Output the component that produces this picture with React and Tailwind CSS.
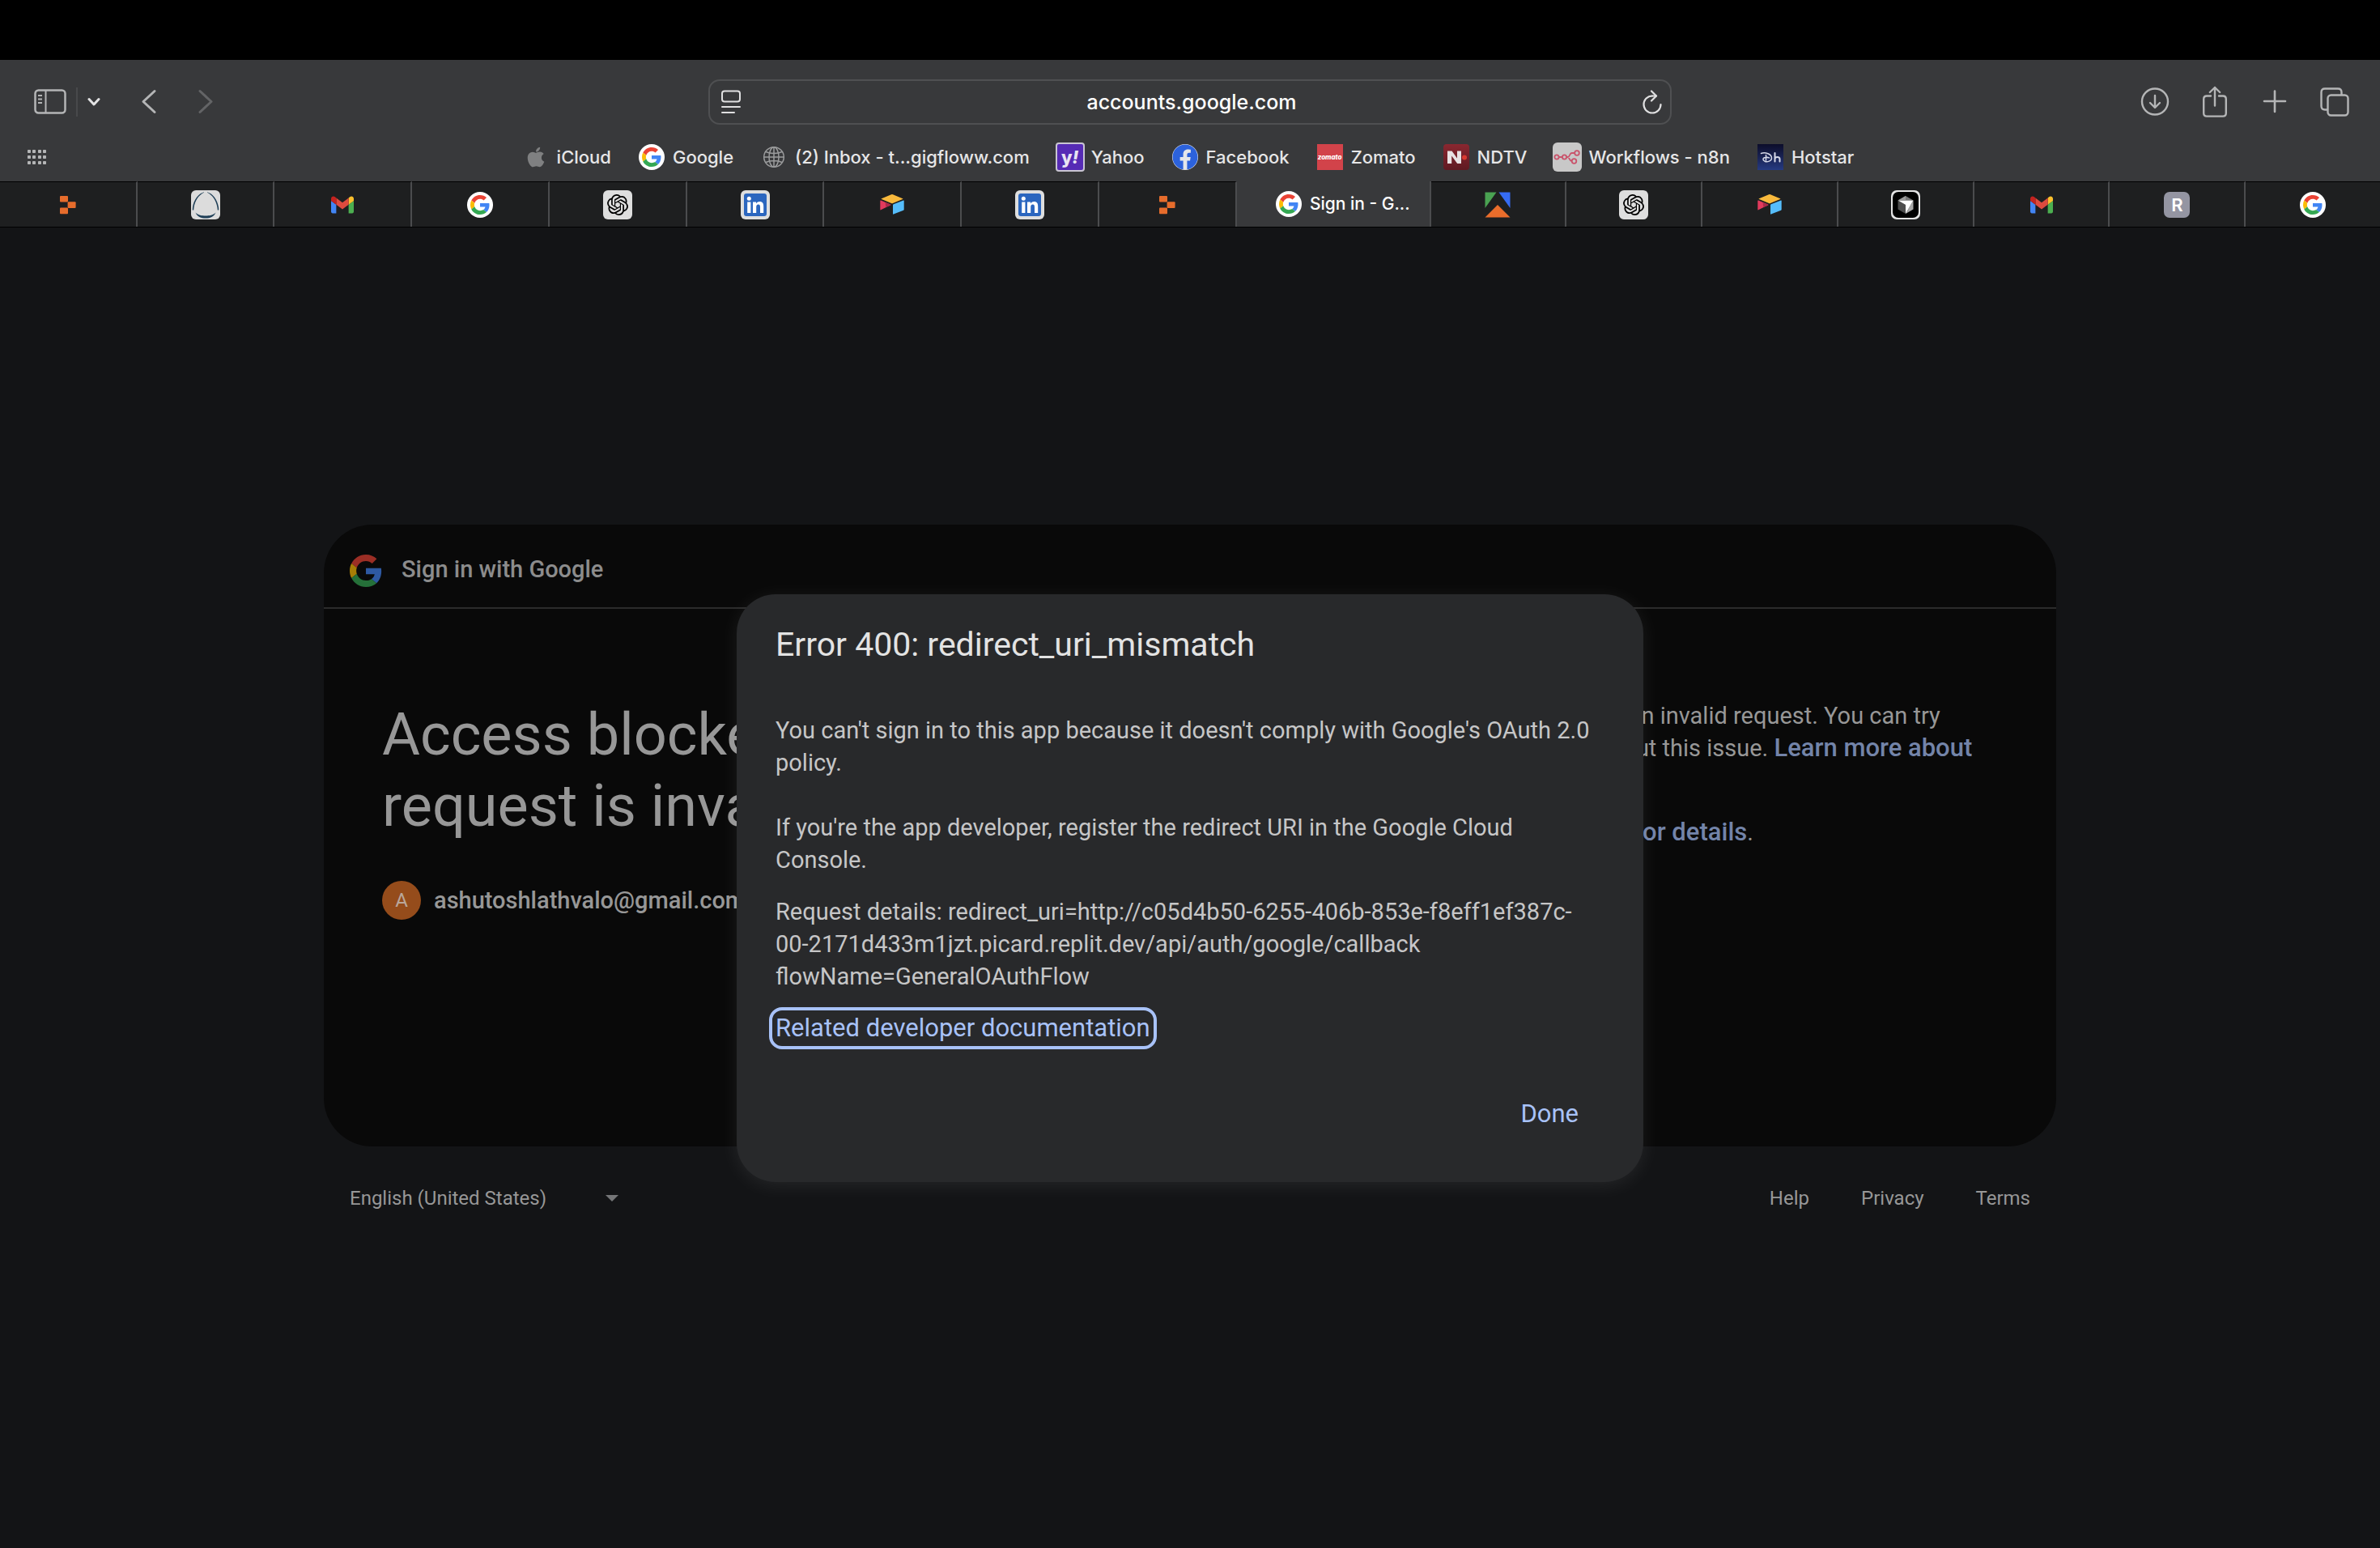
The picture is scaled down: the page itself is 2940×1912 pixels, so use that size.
import { FaApple, FaFacebook } from "react-icons/fa";
import { SiOpenai } from "react-icons/si";

/* ---------- logos ---------- */

function GoogleG({ className }) {
  return (
    <svg viewBox="4 4 40 40" className={className} aria-hidden="true">
      <path fill="#ea4335" d="M24 9.5c3.54 0 6.71 1.22 9.21 3.6l6.85-6.85C35.9 2.38 30.47 0 24 0 14.62 0 6.51 5.38 2.56 13.22l7.98 6.19C12.43 13.72 17.74 9.5 24 9.5z" transform="translate(4 4) scale(.8333)" />
      <path fill="#4285f4" d="M46.98 24.55c0-1.57-.15-3.09-.38-4.55H24v9.02h12.94c-.58 2.96-2.26 5.48-4.78 7.18l7.73 6c4.51-4.18 7.09-10.36 7.09-17.65z" transform="translate(4 4) scale(.8333)" />
      <path fill="#fbbc05" d="M10.53 28.59c-.48-1.45-.76-2.99-.76-4.59s.27-3.14.76-4.59l-7.98-6.19C.92 16.46 0 20.12 0 24c0 3.88.92 7.54 2.56 10.78l7.97-6.19z" transform="translate(4 4) scale(.8333)" />
      <path fill="#34a853" d="M24 48c6.48 0 11.93-2.13 15.89-5.81l-7.73-6c-2.15 1.45-4.92 2.3-8.16 2.3-6.26 0-11.57-4.22-13.47-9.91l-7.98 6.19C6.51 42.62 14.62 48 24 48z" transform="translate(4 4) scale(.8333)" />
    </svg>
  );
}

function GoogleBadge() {
  return (
    <span className="flex size-8 items-center justify-center rounded-full bg-white">
      <GoogleG className="size-6" />
    </span>
  );
}

function ReplitIcon() {
  return (
    <svg viewBox="0 0 20 24" className="h-6 w-5" fill="#e66c2c" aria-hidden="true">
      <rect x="0" y="1" width="10" height="7.6" rx="1" />
      <rect x="9.6" y="8.2" width="10" height="7.8" rx="1" />
      <rect x="0" y="15.6" width="10" height="7.6" rx="1" />
    </svg>
  );
}

function EggIcon() {
  return (
    <svg viewBox="0 0 36 36" className="size-9" fill="#1f3f57" aria-hidden="true">
      <rect width="36" height="36" rx="6" fill="#dcdcdc" />
      <path d="M16 2.2C8.500 4 1.600 14 1.800 24.500h1.400C3.600 15 9 6 16 2.800z" />
      <path d="M20 2.200c7.500 1.800 14.400 11.800 14.200 22.300h-1.400C32.400 15 27 6 20 2.800z" />
      <path d="M5.500 27.500C9 31 13 31.500 18 31.500s9-.5 12.500-4C28.500 32.500 23.500 34.600 18 34.600S7.500 32.500 5.500 27.500z" />
    </svg>
  );
}

function GmailIcon() {
  return (
    <svg viewBox="52 42 88 66" className="h-[22px] w-7" aria-hidden="true">
      <path fill="#4285f4" d="M58 108h14V74L52 59v43c0 3.320 2.690 6 6 6" />
      <path fill="#4caf50" d="M120 108h14c3.320 0 6-2.690 6-6V59l-20 15" />
      <path fill="#fbc02d" d="M120 48v26l20-15v-8c0-7.420-8.470-11.650-14.400-7.200" />
      <path fill="#dd4b3e" d="M72 74V48l24 18 24-18v26L96 92" />
      <path fill="#c5221f" d="M52 51v8l20 15V48l-5.600-4.200c-5.940-4.450-14.400-.220-14.400 7.200" />
    </svg>
  );
}

function OpenAiIcon() {
  return (
    <span className="flex size-9 items-center justify-center rounded-[6px] bg-[#dedede]">
      <SiOpenai className="size-[26px] text-black" aria-hidden="true" />
    </span>
  );
}

function LinkedInIcon() {
  return (
    <svg viewBox="0 0 36 36" className="size-9" aria-hidden="true">
      <rect width="36" height="36" rx="6" fill="#dedede" />
      <rect x="4" y="4" width="28" height="28" rx="3" fill="#2b66bf" />
      <g fill="#fff">
        <circle cx="10.300" cy="10.300" r="2.500" />
        <rect x="8.200" y="14.500" width="4.200" height="13.500" />
        <path d="M15 14.500h4v1.900c.7-1.300 2.200-2.300 4.300-2.300 4 0 4.900 2.500 4.900 6.200V28H24v-6.900c0-1.800-.2-3.500-2.200-3.500-2 0-2.600 1.500-2.600 3.400v7H15z" />
      </g>
    </svg>
  );
}

function AirtableIcon() {
  return (
    <svg viewBox="0 0 30 25" className="h-[25px] w-[30px]" aria-hidden="true">
      <path fill="#f8b93c" d="M2 5.300 14 .3q1-.4 2 0l12 5q.7.4 0 .8L16 11q-1 .4-2 0L2 6.100q-.7-.4 0-.8z" />
      <path fill="#e23a5d" d="M.3 8q0-.8.8-.5L13 12.600q.6.4 0 .8L1.100 19.300q-.8.300-.8-.5z" />
      <path fill="#a82a48" d="M13 12.600q.6.400 0 .8L7.500 16.100 6.500 9.900z" />
      <path fill="#55bdfb" d="M16 13.300q0-.7.7-1L29 7.500q.7-.2.7.5v10.800q0 .6-.6.900L16.800 24.600q-.8.300-.8-.5z" />
    </svg>
  );
}

function TrianglesIcon() {
  return (
    <svg viewBox="0 0 32 32" className="size-8" aria-hidden="true">
      <path fill="#4aa252" d="M.500.500h14L.500 20z" />
      <path fill="#366cf4" d="M17.500.500h14V20z" />
      <path fill="#ea6d2b" d="m.500 31.500 15.500-15.500 15.500 15.500z" />
    </svg>
  );
}

function CursorIcon() {
  return (
    <svg viewBox="0 0 36 36" className="size-9" aria-hidden="true">
      <rect width="36" height="36" rx="7" fill="#e4e4e4" />
      <rect x="2" y="2" width="32" height="32" rx="7" fill="#000" />
      <path fill="#777" d="m18 7 9.500 5.500h-19z" />
      <path fill="#4d4d4d" d="m8.500 12.500 9.500 5.500v11l-9.500-5.500z" />
      <path fill="#a8a8a8" d="M27.500 12.500v11L18 29z" />
      <path fill="#fff" d="M8.500 12.500h19L18 29V18z" />
      <path fill="#9a9a9a" d="m18 7-9.500 5.500H18z" />
    </svg>
  );
}

function RBadge() {
  return (
    <span className="flex size-8 items-center justify-center rounded-[7px] bg-[#9495a2] text-[22px] leading-8 font-semibold text-white">
      R
    </span>
  );
}

function GlobeIcon() {
  return (
    <svg viewBox="0 0 28 28" className="size-7" fill="none" stroke="#9b9c9d" strokeWidth="1.500" aria-hidden="true">
      <circle cx="14" cy="14" r="12.300" />
      <ellipse cx="14" cy="14" rx="6" ry="12.300" />
      <path d="M14 1.700v24.600M1.700 14h24.600M4 7.500c5.500 2.600 14.500 2.600 20 0M4 20.500c5.500-2.600 14.500-2.600 20 0" />
    </svg>
  );
}

function YahooIcon() {
  return (
    <span className="flex size-9 shrink-0 items-center justify-center rounded-[4px] border-2 border-[#c9c5d2] bg-[#562bb5] text-[22px] leading-8 font-extrabold text-[#e8e4f2]">
      y<i>!</i>
    </span>
  );
}

function ZomatoIcon() {
  return (
    <span className="flex size-8 items-center justify-center bg-[#d2434a] text-[8px] font-extrabold text-white italic">
      zomato
    </span>
  );
}

function NdtvIcon() {
  return (
    <span className="flex size-8 items-center justify-center rounded-[4px] bg-linear-to-b from-[#8a2730] to-[#5f1a22]">
      <svg viewBox="0 0 32 32" className="size-8" aria-hidden="true">
        <path fill="#e9e3e4" d="M5 24V8.500h5.500L17 17.500v-9h5V24h-4.800l-7-9.500V24z" />
        <circle cx="26" cy="16.500" r="3" fill="#d93a31" />
      </svg>
    </span>
  );
}

function N8nIcon() {
  return (
    <svg viewBox="0 0 36 36" className="size-9 shrink-0" fill="none" stroke="#c9536b" strokeWidth="1.800" aria-hidden="true">
      <rect width="36" height="36" rx="6" fill="#c8c8c8" stroke="none" />
      <circle cx="5" cy="18" r="2.600" />
      <circle cx="14.500" cy="18" r="2.600" />
      <circle cx="30" cy="13" r="2.800" />
      <circle cx="26.500" cy="23" r="2.800" />
      <path d="M7.600 18h4.300M17.100 18h1.500c3 0 2-5 5-5h3.600M18.600 18c2.600 0 1.800 5 5 5" />
    </svg>
  );
}

function HotstarIcon() {
  return (
    <span className="flex size-8 items-center justify-center bg-linear-to-b from-[#0c0d2a] to-[#263b82]">
      <svg viewBox="0 0 32 32" className="size-8" fill="none" stroke="#d5d8e8" strokeWidth="1.500" strokeLinecap="round" aria-hidden="true">
        <path d="M4.500 11.500c5-1.800 13 .5 13 5.700 0 3.800-5.500 5.300-8.500 4-3-1.500-2.800-4.200 1-4.700 2-.3 3.500 0 4.500.4M10.500 13.500v6.500" />
        <path d="M21.500 11v10.500M21.500 18c.6-2.200 6-3 6 .3v3.200" strokeWidth="2" />
      </svg>
    </span>
  );
}

/* ---------- browser chrome ---------- */

const favourites = [
  { label: "iCloud", icon: <FaApple className="size-7 text-[#7f8081]" aria-hidden="true" /> },
  { label: "Google", icon: <GoogleBadge /> },
  { label: "(2) Inbox - t...gigfloww.com", icon: <GlobeIcon /> },
  { label: "Yahoo", icon: <YahooIcon /> },
  { label: "Facebook", icon: <FaFacebook className="size-8 rounded-full bg-[#e4e6ea] text-[#2c62dc]" aria-hidden="true" /> },
  { label: "Zomato", icon: <ZomatoIcon /> },
  { label: "NDTV", icon: <NdtvIcon /> },
  { label: "Workflows - n8n", icon: <N8nIcon /> },
  { label: "Hotstar", icon: <HotstarIcon /> },
];

const tabs = [
  { name: "Replit", icon: <ReplitIcon /> },
  { name: "Egg", icon: <EggIcon /> },
  { name: "Gmail", icon: <GmailIcon /> },
  { name: "Google", icon: <GoogleBadge /> },
  { name: "ChatGPT", icon: <OpenAiIcon /> },
  { name: "LinkedIn", icon: <LinkedInIcon /> },
  { name: "Airtable", icon: <AirtableIcon /> },
  { name: "LinkedIn", icon: <LinkedInIcon /> },
  { name: "Replit", icon: <ReplitIcon /> },
  { name: "Sign in - G...", icon: <GoogleBadge />, active: true },
  { name: "Triangles", icon: <TrianglesIcon /> },
  { name: "ChatGPT", icon: <OpenAiIcon /> },
  { name: "Airtable", icon: <AirtableIcon /> },
  { name: "Cursor", icon: <CursorIcon /> },
  { name: "Gmail", icon: <GmailIcon /> },
  { name: "R", icon: <RBadge /> },
  { name: "Google", icon: <GoogleBadge /> },
];

function Toolbar() {
  return (
    <div className="flex flex-col gap-[22px] bg-[#38393b] pt-6 pb-3">
      <div className="grid h-14 grid-cols-[1fr_1190px_1fr] items-center">
        <div className="flex items-center pl-[42px] text-[#b4b5b6]">
          <button type="button" aria-label="Sidebar">
            <svg viewBox="0 0 40 32" className="h-8 w-10" fill="none" stroke="currentColor" strokeWidth="2.500">
              <rect x="1.500" y="1.500" width="37" height="28" rx="4" />
              <path d="M14.500 2v27" strokeWidth="2" />
              <path d="M5 8h5M5 12.500h5M5 17h5" strokeWidth="2" />
            </svg>
          </button>
          <span className="ml-3 h-9 w-0.5 bg-[#48494b]" />
          <button type="button" aria-label="Tab groups" className="ml-3">
            <svg viewBox="0 0 16 12" className="h-3 w-4" fill="none" stroke="#e3e3e4" strokeWidth="3" strokeLinecap="round" strokeLinejoin="round">
              <path d="m2 2.500 6 6.500 6-6.500" />
            </svg>
          </button>
          <button type="button" aria-label="Back" className="ml-[50px]">
            <svg viewBox="0 0 20 32" className="h-8 w-5" fill="none" stroke="currentColor" strokeWidth="3" strokeLinecap="round" strokeLinejoin="round">
              <path d="M17 2.500 3 15.500l14 13" />
            </svg>
          </button>
          <button type="button" aria-label="Forward" className="ml-[50px] text-[#636466]">
            <svg viewBox="0 0 20 32" className="h-8 w-5" fill="none" stroke="currentColor" strokeWidth="3" strokeLinecap="round" strokeLinejoin="round">
              <path d="m3 2.500 14 13-14 13" />
            </svg>
          </button>
        </div>

        <div className="flex h-14 items-center rounded-[14px] border-2 border-[#4f5052] pr-2 pl-3 text-[#e0e0e1]">
          <button type="button" aria-label="Page menu">
            <svg viewBox="0 0 28 30" className="h-[30px] w-7" fill="none" stroke="currentColor" strokeWidth="2" strokeLinecap="round">
              <rect x="3" y="1.500" width="22" height="13" rx="3" />
              <path d="M3 21h22M3 28h15" />
            </svg>
          </button>
          <input
            aria-label="Address"
            defaultValue="accounts.google.com"
            className="min-w-0 flex-1 bg-transparent text-center text-[25px] leading-8 font-medium text-white outline-none"
          />
          <button type="button" aria-label="Reload">
            <svg viewBox="0 0 28 30" className="h-[30px] w-7" fill="none" stroke="currentColor" strokeWidth="2.200" strokeLinecap="round" strokeLinejoin="round">
              <path d="M14 7.500a10.500 10.500 0 1 0 10.500 10.500" />
              <path d="m13 1.500 6 6-6 6" />
              <path d="M14 7.500h5" />
            </svg>
          </button>
        </div>

        <div className="flex items-center justify-end gap-[38px] pr-[38px] text-[#b4b5b6]">
          <button type="button" aria-label="Downloads">
            <svg viewBox="0 0 36 36" className="size-9" fill="none" stroke="currentColor" strokeWidth="2.400" strokeLinecap="round" strokeLinejoin="round">
              <circle cx="18" cy="17.500" r="16" />
              <path d="M18 10v14.500M12 19l6 6 6-6" />
            </svg>
          </button>
          <button type="button" aria-label="Share">
            <svg viewBox="0 0 36 40" className="h-10 w-9" fill="none" stroke="currentColor" strokeWidth="2.400" strokeLinecap="round" strokeLinejoin="round">
              <path d="M13 12.500H8q-3.800 0-3.800 3.800v17.500q0 3.800 3.800 3.800h20q3.800 0 3.800-3.800V16.300q0-3.800-3.800-3.800h-5" />
              <path d="M18 24.500V2M11.800 8 18 2l6.200 6" />
            </svg>
          </button>
          <button type="button" aria-label="New tab">
            <svg viewBox="0 0 36 36" className="size-9" fill="none" stroke="currentColor" strokeWidth="2.600" strokeLinecap="round">
              <path d="M18 4.500v25.500M5 17h26" />
            </svg>
          </button>
          <button type="button" aria-label="Tab overview">
            <svg viewBox="0 0 36 36" className="size-9" fill="none" stroke="currentColor" strokeWidth="2.400" strokeLinejoin="round">
              <rect x="9.500" y="9.500" width="25" height="25" rx="4" />
              <path d="M9.500 27.500H6q-4.500 0-4.500-4.500V6q0-4.500 4.500-4.500h16q4.500 0 4.500 4.500v3.500" />
            </svg>
          </button>
        </div>
      </div>

      <nav className="grid h-9 grid-cols-[1fr_auto_1fr] items-center" aria-label="Favourites">
        <button type="button" aria-label="Show start page" className="ml-8 justify-self-start">
          <svg viewBox="0 0 28 20" className="h-5 w-7" fill="#b4b5b6">
            {[1, 8, 15].map((y) => [2, 8, 15, 21].map((x) => <rect key={`${x}-${y}`} x={x} y={y} width="4" height="4" rx=".8" />))}
          </svg>
        </button>
        <div className="flex items-center gap-[34px] pr-1">
          {favourites.map((f) => (
            <a key={f.label} href="#" className="flex items-center gap-2.5 text-[22px] leading-8 font-medium whitespace-nowrap text-[#e6e6e7]">
              <span className="flex size-8 items-center justify-center">{f.icon}</span>
              {f.label}
            </a>
          ))}
        </div>
      </nav>
    </div>
  );
}

function TabBar() {
  return (
    <div role="tablist" className="flex h-[57px] border-b border-black bg-[#1e1f20]">
      {tabs.map((t, i) =>
        t.active ? (
          <button key={i} type="button" role="tab" aria-selected="true" className="flex w-[240px] flex-none items-center justify-end gap-2.5 border-r-2 border-[#4b4c4e] bg-[#38393b] pr-6 text-[21px] leading-8 font-medium whitespace-nowrap text-white">
            {t.icon}
            {t.name}
          </button>
        ) : (
          <button
            key={i}
            type="button"
            role="tab"
            aria-selected="false"
            aria-label={t.name}
            className={`flex items-center justify-center border-t border-r-2 border-t-black border-r-[#4b4c4e] last:border-r-0 ${i < 9 ? "flex-[170]" : "flex-[168]"}`}
          >
            {t.icon}
          </button>
        ),
      )}
    </div>
  );
}

/* ---------- page ---------- */

function SignInCard() {
  return (
    <section className="min-h-[768px] rounded-[60px] bg-[#090909] text-[29px] leading-10 text-[#979797]">
      <header className="flex h-[104px] items-center gap-6 border-b-2 border-[#2b2b2b] px-8 pt-2 font-medium text-[#8c8c8c]">
        <GoogleG className="mt-1 size-10 opacity-65" />
        Sign in with Google
      </header>
      <div className="grid grid-cols-2 gap-[72px] px-[72px] pt-28">
        <div>
          <h1 className="text-[72px] leading-[88px]">Access blocked: This app’s request is invalid</h1>
          <div className="mt-12 flex items-center gap-4 font-medium">
            <span className="flex size-12 items-center justify-center rounded-full bg-[#954c1b] text-[24px] font-normal text-[#b9a79b]">A</span>
            ashutoshlathvalo@gmail.com
          </div>
        </div>
        <div>
          <p>
            You can’t sign in because this app sent an invalid request. You can try again later, or contact the developer about this issue.{" "}
            <a href="#" className="text-[31px] font-medium text-[#7384a9]">Learn more about this error</a>
          </p>
          <p className="mt-6">
            If you are a developer of this app, see{" "}
            <a href="#" className="text-[31px] font-medium text-[#7384a9]">error details</a>.
          </p>
        </div>
      </div>
    </section>
  );
}

function Footer() {
  return (
    <footer className="mt-12 flex items-center justify-between px-8 text-[24px] leading-8 text-[#979797]">
      <div className="relative">
        <select aria-label="Language" className="w-[340px] appearance-none bg-transparent outline-none">
          <option>English (United States)</option>
        </select>
        <svg viewBox="0 0 16 8" className="pointer-events-none absolute top-3 right-2 h-2 w-4" fill="#757678" aria-hidden="true">
          <path d="M0 0h16L8 8z" />
        </svg>
      </div>
      <nav className="flex gap-16" aria-label="Legal">
        <a href="#">Help</a>
        <a href="#">Privacy</a>
        <a href="#">Terms</a>
      </nav>
    </footer>
  );
}

function ErrorDialog() {
  return (
    <div
      role="dialog"
      aria-labelledby="error-title"
      className="w-[1120px] rounded-[48px] bg-[#28292b] px-12 pt-[34px] pb-16 text-[29px] leading-10 text-[#c6c6c7] shadow-[0_4px_24px_rgba(255,255,255,0.08)]"
    >
      <h2 id="error-title" className="text-[41px] leading-[56px] text-[#e3e3e3]">
        Error 400: redirect_uri_mismatch
      </h2>
      <p className="mt-[58px]">You can't sign in to this app because it doesn't comply with Google's OAuth 2.0 policy.</p>
      <p className="mt-10">If you're the app developer, register the redirect URI in the Google Cloud Console.</p>
      <p className="mt-6">
        Request details: redirect_uri=http://c05d4b50-6255-406b-853e-f8eff1ef387c-<wbr />
        00-2171d433m1jzt.picard.replit.dev/api/auth/google/callback flowName=GeneralOAuthFlow
      </p>
      <a
        href="#"
        className="mt-[18px] -ml-2 block w-fit rounded-[16px] border-4 border-[#a8c2f8] px-1 text-[31px] leading-[44px] font-[450] text-[#a8c2f8]"
      >
        Related developer documentation
      </a>
      <div className="mt-[60px] flex justify-end pr-8">
        <button type="button" className="text-[31px] leading-10 font-[450] text-[#a8c2f8]">Done</button>
      </div>
    </div>
  );
}

export default function App() {
  return (
    <div className="flex min-h-screen flex-col bg-[#131416] font-['Inter',sans-serif]">
      <div className="h-[74px] bg-black" />
      <Toolbar />
      <TabBar />
      <main className="relative flex-1 px-[400px] pt-[367px] font-['Roboto',sans-serif]">
        <SignInCard />
        <Footer />
        <div className="absolute inset-0 flex items-center justify-center">
          <ErrorDialog />
        </div>
      </main>
    </div>
  );
}
